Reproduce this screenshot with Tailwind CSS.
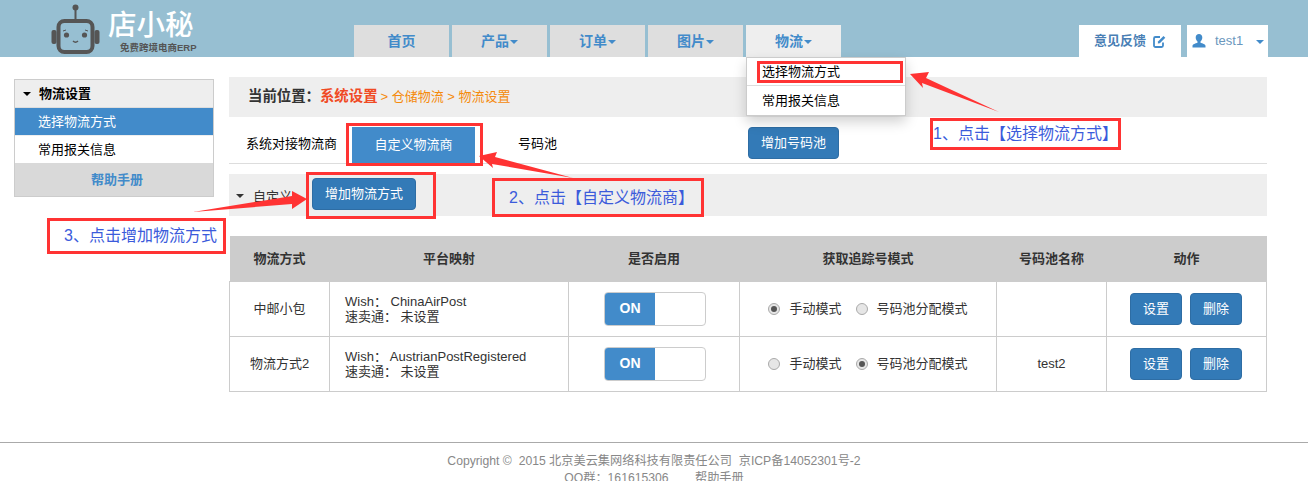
<!doctype html>
<html>
  <head>
    <meta charset="utf-8" />
    <script src="https://cdn.jsdelivr.net/npm/@tailwindcss/browser@4"></script>
  </head>
  <body class="bg-white text-[13px] text-[#333] [font-family:'Liberation_Sans','Noto_Sans_CJK_SC',sans-serif]">
    <div class="relative w-[1308px] h-[481px] overflow-hidden">
      <!-- top bar -->
      <header class="h-[57px] bg-[#97bfd2] flex items-end">
        <div class="relative w-[354px] h-[57px] shrink-0">
          <div class="flex items-start pl-[51px] pt-[4px]">
            <svg width="50" height="50" viewBox="0 0 50 50" class="shrink-0">
              <circle cx="24.5" cy="3.5" r="3" fill="#555" />
              <rect x="23.5" y="4" width="2" height="13" fill="#555" />
              <rect x="7.5" y="17" width="34" height="31" rx="6" fill="none" stroke="#555" stroke-width="4" />
              <rect x="0.5" y="26" width="5" height="14" rx="2" fill="#555" />
              <rect x="43.5" y="26" width="5" height="14" rx="2" fill="#555" />
              <circle cx="15.5" cy="31" r="2.6" fill="#555" />
              <circle cx="33.5" cy="31" r="2.6" fill="#555" />
              <path d="M12 27l3-1M37 27l-3-1" stroke="#555" stroke-width="1" fill="none" />
              <path d="M22 37q2.500 2.500 5 0" stroke="#555" stroke-width="1.400" fill="none" />
            </svg>
            <div class="ml-[7px] w-[90px]">
              <div class="mt-[4px] text-[28.500px] leading-[34px] font-medium text-white whitespace-nowrap">店小秘</div>
              <div class="ml-[12px] text-[9.500px] leading-[12px] font-bold text-[#555] whitespace-nowrap">免费跨境电商ERP</div>
            </div>
          </div>
        </div>
        <nav class="flex gap-[3px] text-[14px] font-bold text-[#428bca]">
          <a class="w-[95px] h-[32px] bg-[#dedede] flex items-center justify-center">首页</a>
          <a class="w-[95px] h-[32px] bg-[#dedede] flex items-center justify-center gap-[1px]">产品<span class="mt-[1px] border-x-[4px] border-x-transparent border-t-[4px] border-t-[#428bca]"></span></a>
          <a class="w-[95px] h-[32px] bg-[#dedede] flex items-center justify-center gap-[1px]">订单<span class="mt-[1px] border-x-[4px] border-x-transparent border-t-[4px] border-t-[#428bca]"></span></a>
          <a class="w-[95px] h-[32px] bg-[#dedede] flex items-center justify-center gap-[1px]">图片<span class="mt-[1px] border-x-[4px] border-x-transparent border-t-[4px] border-t-[#428bca]"></span></a>
          <a class="w-[95px] h-[32px] bg-[#eeeeee] flex items-center justify-center gap-[1px]">物流<span class="mt-[1px] border-x-[4px] border-x-transparent border-t-[4px] border-t-[#428bca]"></span></a>
        </nav>
        <div class="ml-[238px] flex gap-[6px] text-[#428bca]">
          <a class="w-[102px] h-[32px] bg-white flex items-center justify-center gap-[7px] font-bold text-[#4a7fb5]">
            意见反馈
            <svg width="13" height="13" viewBox="0 0 13 13">
              <path d="M10 7.500V10.500a1.500 1.500 0 0 1-1.500 1.500h-6A1.500 1.500 0 0 1 1 10.500v-7A1.500 1.500 0 0 1 2.500 2H7" fill="none" stroke="#428bca" stroke-width="1.800" />
              <path d="M5 6.500L10.500 1l1.800 1.800L6.800 8.300 4.800 8.600z" fill="#428bca" />
            </svg>
          </a>
          <a class="w-[81px] h-[32px] bg-white flex items-center pl-[5px]">
            <svg width="14" height="14" viewBox="0 0 14 14">
              <path d="M7 0c2 0 3.300 1.400 3.300 3.500 0 1.700-.8 3.300-1.800 4v1.200c1.800.6 5 1.400 5 3.100V13.500H.5v-1.700c0-1.700 3.200-2.500 5-3.100V7.500c-1-.7-1.800-2.300-1.800-4C3.700 1.400 5 0 7 0z" fill="#428bca" />
            </svg>
            <span class="ml-[9px] text-[13px] text-[#6b97bd]">test1</span>
            <span class="ml-[13px] mt-[1px] border-x-[4px] border-x-transparent border-t-[4px] border-t-[#428bca]"></span>
          </a>
        </div>
      </header>

      <div class="flex items-start">
        <!-- side menu -->
        <aside class="ml-[14px] mt-[22px] w-[200px] border border-[#ccc] text-black">
          <div class="h-[28px] bg-[#eeeeee] border-b border-[#ddd] flex items-center pl-[8px] font-bold">
            <span class="border-x-[4px] border-x-transparent border-t-[4px] border-t-black"></span>
            <span class="ml-[8px]">物流设置</span>
          </div>
          <div class="h-[27px] bg-[#428bca] text-white flex items-center pl-[23px]">选择物流方式</div>
          <div class="h-[1px] bg-[#eee]"></div>
          <div class="h-[27px] bg-white flex items-center pl-[23px]">常用报关信息</div>
          <div class="h-[33px] bg-[#d9d9d9] flex items-center justify-center pl-[6px] font-bold text-[#428bca]">帮助手册</div>
        </aside>

        <main class="ml-[15px] mt-[20px] w-[1038px]">
          <div class="h-[40px] bg-[#eeeeee] flex items-center pl-[19px] text-[14.400px] font-bold">
            <span class="text-[#333]">当前位置：</span>
            <span class="text-[#f04a24]">系统设置</span>
            <span class="ml-[3px] font-normal text-[13px] text-[#f58a0b]">&gt; 仓储物流 &gt; 物流设置</span>
          </div>

          <div class="h-[47px] border-b border-[#ddd] flex items-start text-black">
            <span class="ml-[17px] mt-[19px] leading-[15px] w-[106px]">系统对接物流商</span>
            <a class="mt-[10px] w-[123px] h-[36px] bg-[#428bca] text-white flex items-center justify-center">自定义物流商</a>
            <span class="ml-[43px] mt-[19px] leading-[15px] w-[230px]">号码池</span>
            <a class="mt-[10px] w-[91px] h-[32px] bg-[#337ab7] border border-[#2e6da4] rounded-[4px] text-white flex items-center justify-center">增加号码池</a>
          </div>

          <div class="mt-[10px] h-[42px] bg-[#eeeeee] flex items-center pl-[7px]">
            <span class="mt-[1px] border-x-[4px] border-x-transparent border-t-[4px] border-t-[#333]"></span>
            <span class="ml-[9px] w-[59px] mt-[3px]">自定义</span>
            <a class="mb-[3px] w-[104px] h-[32px] bg-[#337ab7] border border-[#2e6da4] rounded-[4px] text-white flex items-center justify-center">增加物流方式</a>
          </div>

          <table class="mt-[20px] w-[1037px] table-fixed border-collapse text-center">
            <colgroup>
              <col class="w-[100px]" />
              <col class="w-[239px]" />
              <col class="w-[171px]" />
              <col class="w-[257px]" />
              <col class="w-[110px]" />
              <col class="w-[160px]" />
            </colgroup>
            <thead>
              <tr class="h-[45px] bg-[#cccccc] font-bold">
                <th>物流方式</th>
                <th>平台映射</th>
                <th>是否启用</th>
                <th>获取追踪号模式</th>
                <th>号码池名称</th>
                <th>动作</th>
              </tr>
            </thead>
            <tbody>
              <tr class="h-[55px]">
                <td class="border border-[#ccc]">中邮小包</td>
                <td class="border border-[#ccc] text-left pl-[15px] leading-[15px]">Wish： ChinaAirPost<br />速卖通： 未设置</td>
                <td class="border border-[#ccc]">
                  <div class="ml-[35px] w-[102px] h-[34px] border border-[#ccc] rounded-[4px] overflow-hidden">
                    <div class="w-[50px] h-full bg-[#428bca] text-white text-[14px] font-bold flex items-center justify-center">ON</div>
                  </div>
                </td>
                <td class="border border-[#ccc]">
                  <div class="flex items-center justify-center">
                    <span class="w-[12px] h-[12px] rounded-full border border-[#aaa] bg-[#e6e6e6] flex items-center justify-center"><span class="w-[6px] h-[6px] rounded-full bg-[#555]"></span></span>
                    <span class="ml-[9px]">手动模式</span>
                    <span class="ml-[14px] w-[12px] h-[12px] rounded-full border border-[#aaa] bg-[#e6e6e6]"></span>
                    <span class="ml-[9px]">号码池分配模式</span>
                  </div>
                </td>
                <td class="border border-[#ccc]"></td>
                <td class="border border-[#ccc]">
                  <div class="flex justify-center gap-[8px] pr-[1px]">
                    <a class="w-[52px] h-[32px] bg-[#337ab7] border border-[#2e6da4] rounded-[4px] text-white flex items-center justify-center">设置</a>
                    <a class="w-[52px] h-[32px] bg-[#337ab7] border border-[#2e6da4] rounded-[4px] text-white flex items-center justify-center">删除</a>
                  </div>
                </td>
              </tr>
              <tr class="h-[55px]">
                <td class="border border-[#ccc]">物流方式2</td>
                <td class="border border-[#ccc] text-left pl-[15px] leading-[15px]">Wish： AustrianPostRegistered<br />速卖通： 未设置</td>
                <td class="border border-[#ccc]">
                  <div class="ml-[35px] w-[102px] h-[34px] border border-[#ccc] rounded-[4px] overflow-hidden">
                    <div class="w-[50px] h-full bg-[#428bca] text-white text-[14px] font-bold flex items-center justify-center">ON</div>
                  </div>
                </td>
                <td class="border border-[#ccc]">
                  <div class="flex items-center justify-center">
                    <span class="w-[12px] h-[12px] rounded-full border border-[#aaa] bg-[#e6e6e6]"></span>
                    <span class="ml-[9px]">手动模式</span>
                    <span class="ml-[14px] w-[12px] h-[12px] rounded-full border border-[#aaa] bg-[#e6e6e6] flex items-center justify-center"><span class="w-[6px] h-[6px] rounded-full bg-[#555]"></span></span>
                    <span class="ml-[9px]">号码池分配模式</span>
                  </div>
                </td>
                <td class="border border-[#ccc]">test2</td>
                <td class="border border-[#ccc]">
                  <div class="flex justify-center gap-[8px] pr-[1px]">
                    <a class="w-[52px] h-[32px] bg-[#337ab7] border border-[#2e6da4] rounded-[4px] text-white flex items-center justify-center">设置</a>
                    <a class="w-[52px] h-[32px] bg-[#337ab7] border border-[#2e6da4] rounded-[4px] text-white flex items-center justify-center">删除</a>
                  </div>
                </td>
              </tr>
            </tbody>
          </table>
        </main>
      </div>

      <footer class="mt-[50px] border-t border-[#aaa] pt-[10px] text-center text-[12.200px] leading-[17px] text-[#888]">
        <div>Copyright ©&nbsp; 2015 北京美云集网络科技有限责任公司&nbsp; 京ICP备14052301号-2</div>
        <div>QQ群：161615306 <span class="ml-[23px]">帮助手册</span></div>
      </footer>

      <!-- open dropdown -->
      <div class="absolute left-[746px] top-[57px] w-[160px] h-[59px] bg-white border border-[#ccc] shadow-[0_6px_12px_rgba(0,0,0,0.18)] text-black">
        <div class="h-[28px] border-b border-[#ddd] flex items-center pl-[15px]">选择物流方式</div>
        <div class="h-[29px] flex items-center pl-[15px]">常用报关信息</div>
      </div>

      <!-- tutorial annotations -->
      <div class="absolute left-[757px] top-[61px] w-[146px] h-[22px] border-[3px] border-[#ff3333]"></div>
      <div class="absolute left-[346px] top-[123px] w-[137px] h-[43px] border-[3px] border-[#ff3333]"></div>
      <div class="absolute left-[306px] top-[172px] w-[130px] h-[47px] border-[3px] border-[#ff3333]"></div>
      <div class="absolute left-[930px] top-[118px] w-[191px] h-[32px] border-[3px] border-[#ff3333] flex items-center pl-[0px] text-[16px] text-[#3b5bdb] whitespace-nowrap">1、点击【选择物流方式】</div>
      <div class="absolute left-[492px] top-[178px] w-[212px] h-[39px] border-[3px] border-[#ff3333] flex items-center pl-[14px] text-[16px] text-[#3b5bdb] whitespace-nowrap">2、点击【自定义物流商】</div>
      <div class="absolute left-[47px] top-[218px] w-[179px] h-[36px] border-[3px] border-[#ff3333] flex items-center pl-[14px] text-[16px] text-[#3b5bdb] whitespace-nowrap">3、点击增加物流方式</div>
      <svg class="absolute left-0 top-0 pointer-events-none" width="1308" height="481">
        <polygon points="910,74 929,72 926,78 999,112 922,83 923,88" fill="#ff3333" />
        <polygon points="479,156 497,152 495,157 573,178 492,164 493,168" fill="#ff3333" />
        <polygon points="307,199 292,191 292,196 193,212 292,204 292,209" fill="#ff3333" />
      </svg>
    </div>
  </body>
</html>
